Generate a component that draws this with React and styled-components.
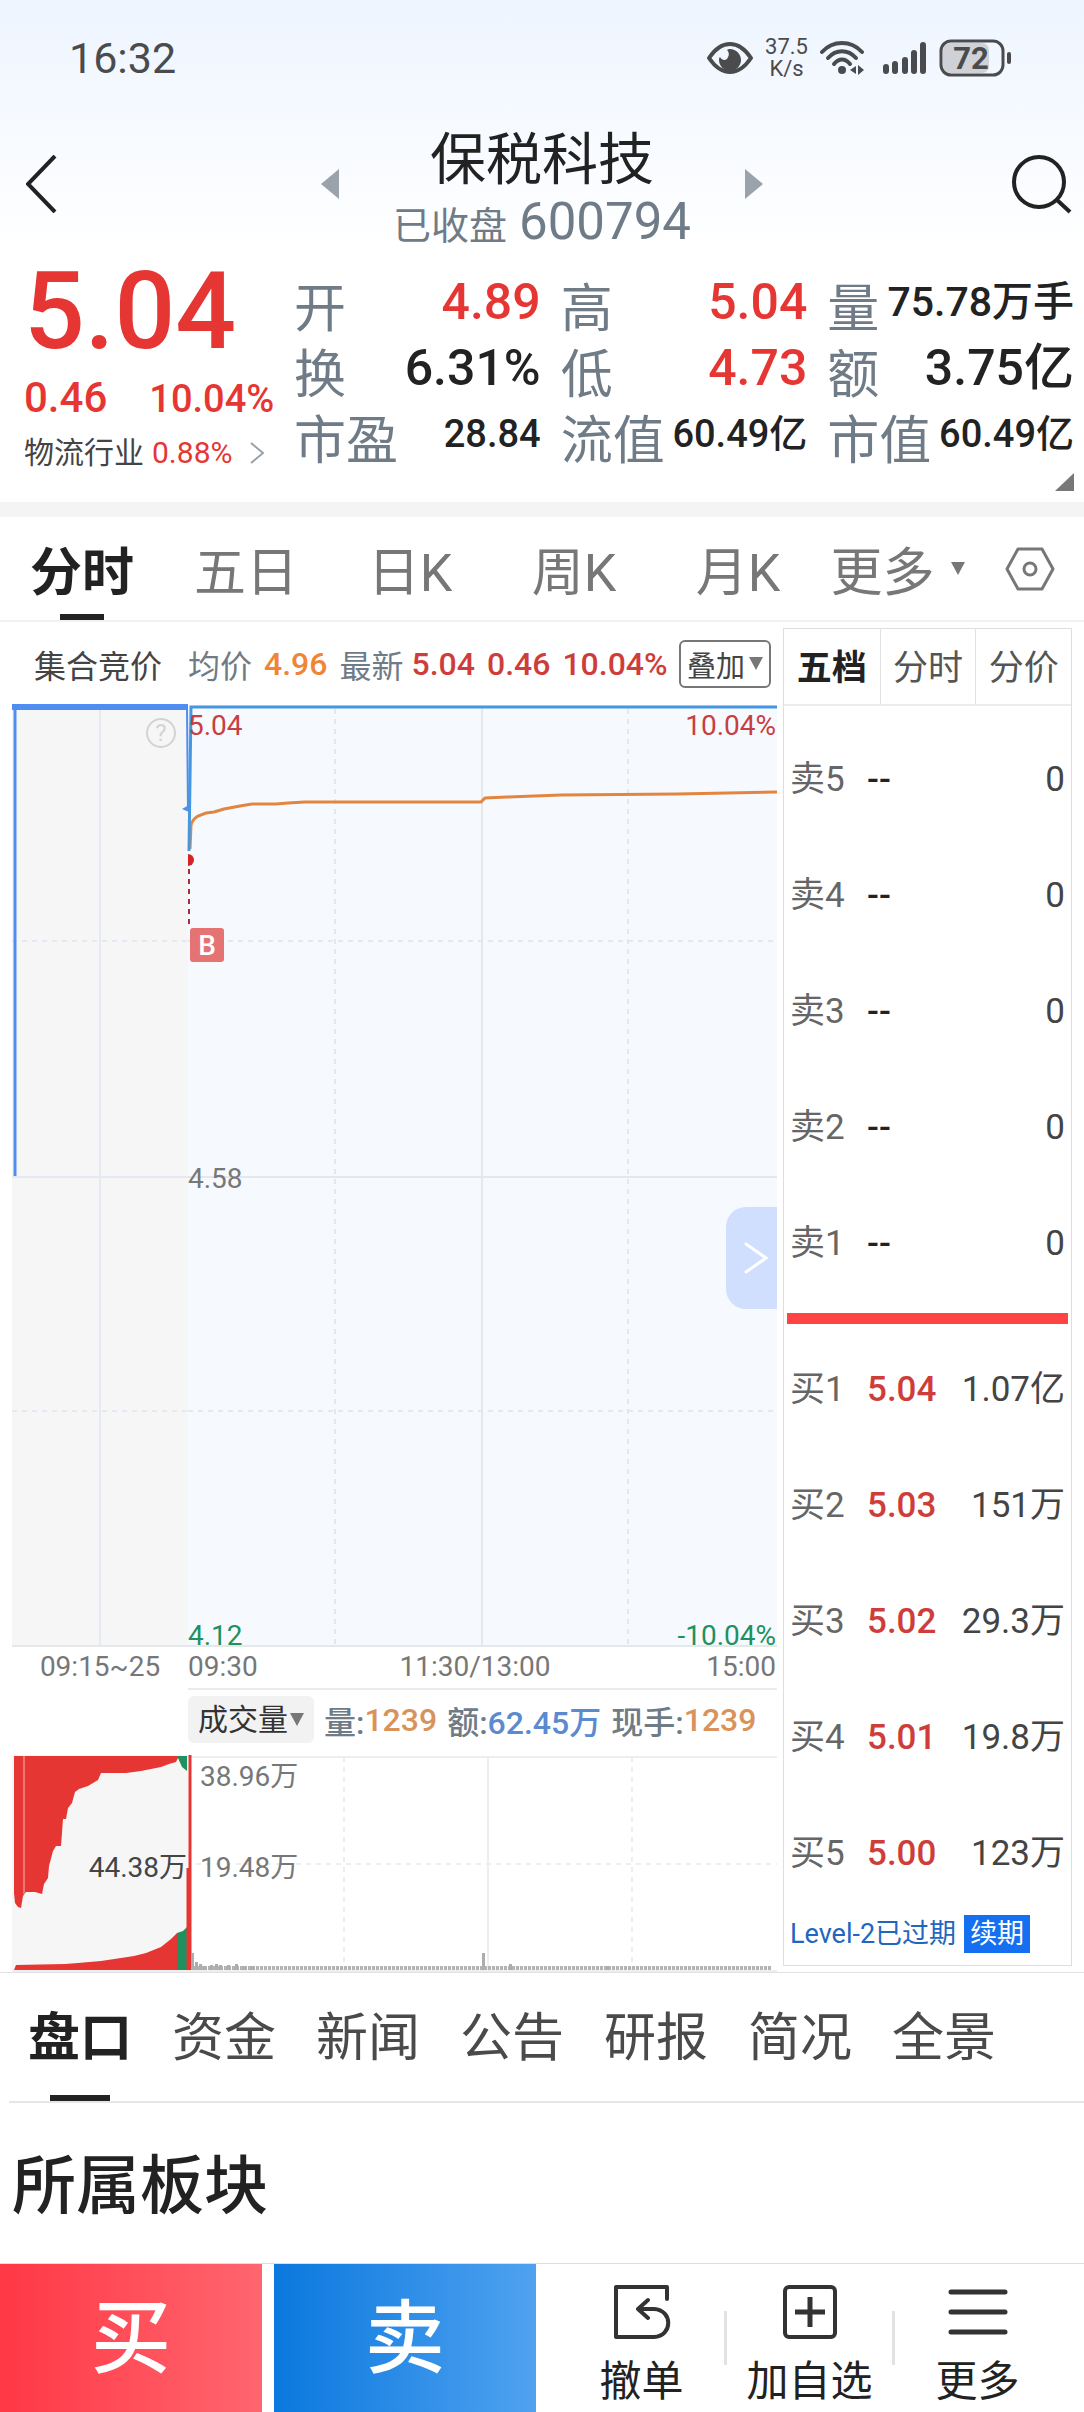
import React, { useState } from 'react';
import styled, { createGlobalStyle } from 'styled-components';

const GlobalStyle = createGlobalStyle`
  * {
    box-sizing: border-box;
  }

  body {
    margin: 0;
    background: #ffffff;
    color: #222222;
    font-family: Roboto, 'Noto Sans CJK SC', sans-serif;
  }

  button, select {
    margin: 0;
    padding: 0;
    border: 0;
    background: none;
    color: inherit;
    font: inherit;
    cursor: pointer;
  }

  a {
    color: inherit;
    text-decoration: none;
  }

  svg {
    display: block;
  }
`;

const colors = {
    red: '#e63633',
    green: '#1f9160',
    slate: '#6f7b86',
    ink: '#222222',
    orange: '#f08535',
    blue: '#5b8ad0',
};

const Top = styled.div`
  background: linear-gradient(#eef5ff, #ffffff 250px);
`;

const StatusBar = styled.div`
  display: flex;
  justify-content: space-between;
  align-items: center;
  height: 116px;
  padding: 0 72px 0 69px;
  color: #4a4b4d;
`;

const Clock = styled.span`
  font-size: 43px;
`;

const StatusIcons = styled.div`
  display: flex;
  align-items: center;
  gap: 12px;
`;

const NetSpeed = styled.span`
  font-size: 22px;
  line-height: 22px;
  text-align: center;
`;

const NetLine = styled.span`
  display: block;
`;

const Header = styled.header`
  display: grid;
  grid-template-columns: 1fr auto 1fr;
  align-items: center;
  height: 136px;
  padding: 0 11px;
`;

const IconButton = styled.button`
  display: flex;
  justify-self: ${(props) => props.$side || 'center'};
  padding-left: ${(props) => (props.$side === 'start' ? 15 : 0)}px;
`;

const StockSwitch = styled.div`
  display: flex;
  justify-content: space-between;
  align-items: center;
  width: 442px;
`;

const StockTitle = styled.div`
  padding-top: 12px;
  text-align: center;
`;

const StockName = styled.h1`
  margin: 0;
  font-size: 56px;
  font-weight: 400;
  line-height: 64px;
`;

const StockCode = styled.div`
  display: flex;
  align-items: baseline;
  gap: 12px;
  height: 60px;
  color: ${colors.slate};
  font-size: 51px;
  line-height: 60px;
`;

const StockState = styled.span`
  font-size: 38px;
`;

const Quote = styled.section`
  display: grid;
  grid-template-columns: 270px 1fr;
  padding: 10px 10px 11px 24px;
`;

const Price = styled.div`
  color: ${colors.red};
  font-size: 107px;
  font-weight: 500;
  line-height: 100px;
`;

const Change = styled.div`
  display: flex;
  align-items: baseline;
  gap: 42px;
  margin-top: 8px;
  color: ${colors.red};
  font-size: 42px;
  font-weight: 500;
  line-height: 56px;
`;

const ChangeRate = styled.span`
  font-size: 38px;
`;

const Industry = styled.a`
  display: flex;
  align-items: center;
  gap: 8px;
  margin-top: 6px;
  color: #444444;
  font-size: 30px;
  line-height: 40px;

  svg {
    margin-left: 10px;
  }
`;

const Rate = styled.span`
  color: ${colors.red};
`;

const Stats = styled.dl`
  display: grid;
  grid-template-columns: repeat(3, 1fr);
  grid-auto-rows: 66px;
  column-gap: 20px;
  margin: 12px 0 0;
`;

const Stat = styled.div`
  display: flex;
  justify-content: space-between;
  white-space: nowrap;
`;

const StatLabel = styled.dt`
  color: ${colors.slate};
  font-size: 52px;
  line-height: 72px;
`;

const StatValue = styled.dd`
  margin: 0;
  color: ${(props) => (props.$up ? colors.red : colors.ink)};
  font-size: ${(props) => props.$size}px;
  font-weight: 500;
  line-height: 56px;
`;

const Corner = styled.svg`
  grid-column: 1 / -1;
  justify-self: end;
`;

const Band = styled.div`
  height: 15px;
  background: #f4f4f4;
`;

const PeriodBar = styled.nav`
  display: flex;
  align-items: stretch;
  height: 105px;
  border-bottom: 2px solid #f2f2f2;
`;

const PeriodTab = styled.button`
  position: relative;
  flex: 164 1 0;
  font-size: 52px;
  color: ${(props) => (props.$active ? colors.ink : '#777777')};
  font-weight: ${(props) => (props.$active ? 700 : 400)};

  &::after {
    content: '';
    display: ${(props) => (props.$active ? 'block' : 'none')};
    position: absolute;
    left: 50%;
    bottom: 0;
    width: 44px;
    height: 6px;
    margin-left: -22px;
    background: ${colors.ink};
  }
`;

const MoreTab = styled.button`
  display: flex;
  flex: 155 1 0;
  justify-content: center;
  align-items: center;
  gap: 16px;
  color: #777777;
  font-size: 52px;
`;

const SettingTab = styled.button`
  display: flex;
  flex: 109 1 0;
  justify-content: center;
  align-items: center;
`;

const Board = styled.main`
  display: grid;
  grid-template-columns: 765fr 289fr;
  align-items: start;
  gap: 6px;
  padding: 6px 12px 0;
  border-bottom: 1px solid #e2e2e2;
`;

const ChartColumn = styled.section`
  min-width: 0;
`;

const InfoRow = styled.div`
  display: flex;
  align-items: center;
  height: 75px;
  padding: 0 6px 4px 22px;
  font-size: 32px;
  white-space: nowrap;
`;

const InfoLabel = styled.span`
  margin-left: ${(props) => props.$gap || 0}px;
  color: ${(props) => props.$color || colors.slate};
`;

const InfoValue = styled.span`
  margin-left: ${(props) => props.$gap}px;
  color: ${(props) => props.$color || '#cf3d3b'};
  font-weight: 500;
`;

const OverlayButton = styled.button`
  display: flex;
  align-items: center;
  gap: 4px;
  height: 48px;
  margin-left: auto;
  padding: 0 6px;
  border: 2px solid #777777;
  border-radius: 6px;
  color: #444444;
  font-size: 29px;
`;

const ChartArea = styled.div`
  position: relative;
`;

const Chart = styled.svg`
  width: 100%;
  height: auto;
  font-size: 28px;
`;

const ExpandButton = styled.button`
  display: flex;
  justify-content: center;
  align-items: center;
  position: absolute;
  top: 504px;
  right: 0;
  width: 51px;
  height: 102px;
  padding-left: 8px;
  border-radius: 20px 0 0 20px;
  background: #cfdffd;
`;

const IndicatorRow = styled.div`
  display: flex;
  align-items: center;
  margin-left: 23%;
  height: 65px;
  padding-bottom: 4px;
  border-top: 2px solid #ebebeb;
  color: ${colors.slate};
  font-size: 32px;
  font-weight: 500;
  white-space: nowrap;
`;

const IndicatorPick = styled.label`
  display: flex;
  align-items: center;
  height: 47px;
  margin-right: 10px;
  padding: 0 10px;
  border-radius: 6px;
  background: #f2f2f2;
  color: #333333;
`;

const IndicatorSelect = styled.select`
  appearance: none;
  width: 92px;
  font-size: 30px;
  font-weight: 400;
`;

const IndicatorValue = styled.span`
  margin-right: 10px;
  color: ${(props) => props.$color};
`;

const OrderBook = styled.aside`
  border: 1px solid #dedede;
`;

const BookTabs = styled.div`
  display: grid;
  grid-template-columns: repeat(3, 1fr);
  height: 77px;
  border-bottom: 2px solid #ececec;
`;

const BookTab = styled.button`
  padding-bottom: 4px;
  border-left: ${(props) => (props.$first ? 0 : 1)}px solid #e2e2e2;
  color: ${(props) => (props.$active ? colors.ink : '#555555')};
  font-size: 35px;
  font-weight: ${(props) => (props.$active ? 700 : 400)};
`;

const BookTable = styled.table`
  width: 100%;
  margin-top: ${(props) => props.$top}px;
  border-collapse: collapse;
  font-size: 35px;
  line-height: 116px;
  white-space: nowrap;

  th, td {
    padding: 0 0 0 6px;
    text-align: left;
    vertical-align: baseline;
    font-weight: 400;
  }

  th {
    width: 77px;
    color: #666666;
  }

  td:last-child {
    padding: 0 6px 0 0;
    color: #444444;
    text-align: right;
  }
`;

const BookPrice = styled.td`
  && {
    color: ${(props) => (props.$empty ? colors.ink : '#cf3d3b')};
    font-weight: 500;
  }
`;

const BookDivider = styled.div`
  height: 11px;
  margin: 11px 3px 0;
  background: #ff4444;
`;

const LevelRow = styled.div`
  display: flex;
  align-items: center;
  gap: 8px;
  padding: 3px 0 12px 6px;
  color: #2266c0;
  font-size: 27px;
  line-height: 38px;
  white-space: nowrap;
`;

const RenewButton = styled.button`
  height: 38px;
  padding: 0 6px;
  background: #1470f0;
  color: #ffffff;
`;

const SectionTabs = styled.nav`
  display: flex;
  gap: 40px;
  height: 130px;
  margin-left: 9px;
  padding: 0 0 0 19px;
  border-bottom: 2px solid #e6e6e6;
`;

const SectionTab = styled.button`
  position: relative;
  padding-bottom: 8px;
  font-size: 52px;
  color: ${(props) => (props.$active ? colors.ink : '#4a4a4a')};
  font-weight: ${(props) => (props.$active ? 700 : 400)};

  &::after {
    content: '';
    display: ${(props) => (props.$active ? 'block' : 'none')};
    position: absolute;
    left: 50%;
    bottom: 0;
    width: 60px;
    height: 6px;
    margin-left: -30px;
    background: ${colors.ink};
  }
`;

const SectionTitle = styled.h2`
  margin: 0;
  padding: 36px 12px 28px;
  font-size: 64px;
  font-weight: 500;
  line-height: 96px;
`;

const BottomBar = styled.footer`
  display: flex;
  height: 150px;
  border-top: 1px solid #dddddd;
`;

const TradeButton = styled.button`
  flex: 262 1 0;
  margin-right: 12px;
  background: linear-gradient(90deg, ${(props) => props.$from}, ${(props) => props.$to});
  color: #ffffff;
  font-size: 80px;
  font-weight: 500;
  line-height: 140px;
`;

const Actions = styled.div`
  display: flex;
  flex: 501 1 0;
  padding: 20px 24px 0 11px;
`;

const Action = styled.button`
  display: flex;
  flex: 1 1 0;
  flex-direction: column;
  align-items: center;
  gap: 12px;
  color: ${colors.ink};
  font-size: 42px;
  line-height: 60px;
  white-space: nowrap;
`;

const ActionLine = styled.span`
  width: 3px;
  height: 54px;
  margin-top: 27px;
  background: #e2e2e2;
`;

const stats = [
    { label: '开', value: '4.89', size: 50, up: true },
    { label: '高', value: '5.04', size: 50, up: true },
    { label: '量', value: '75.78万手', size: 41 },
    { label: '换', value: '6.31%', size: 50 },
    { label: '低', value: '4.73', size: 50, up: true },
    { label: '额', value: '3.75亿', size: 50 },
    { label: '市盈', value: '28.84', size: 38 },
    { label: '流值', value: '60.49亿', size: 38 },
    { label: '市值', value: '60.49亿', size: 38 },
];

const periods = ['分时', '五日', '日K', '周K', '月K'];
const bookTabs = ['五档', '分时', '分价'];
const sections = ['盘口', '资金', '新闻', '公告', '研报', '简况', '全景'];

const sells = [
    ['卖5', '--', '0'],
    ['卖4', '--', '0'],
    ['卖3', '--', '0'],
    ['卖2', '--', '0'],
    ['卖1', '--', '0'],
];

const buys = [
    ['买1', '5.04', '1.07亿'],
    ['买2', '5.03', '151万'],
    ['买3', '5.02', '29.3万'],
    ['买4', '5.01', '19.8万'],
    ['买5', '5.00', '123万'],
];

// x position and height of the taller volume bars
const volumeBars = [
    [181, 17], [185, 8], [189, 6], [193, 4], [200, 5], [205, 6], [209, 5],
    [217, 5], [225, 6], [233, 4], [241, 4], [472, 17], [499, 6], [596, 4],
];

const Caret = ({ width = 14, height = 13, color = '#777777' }) => (
    <svg width={width} height={height} viewBox="0 0 14 13" preserveAspectRatio="none" aria-hidden="true">
        <path d="M0 0H14L7 13Z" fill={color} />
    </svg>
);

const EyeIcon = () => (
    <svg width="46" height="32" viewBox="0 0 46 32" fill="none" aria-hidden="true">
        <path d="M2 16C8 7 15 2 23 2S38 7 44 16C38 25 31 30 23 30S8 25 2 16Z" stroke="#4a4b4d" strokeWidth="4" strokeLinejoin="round" />
        <path d="M23 7C29 7 34 12 34 18S29 29 23 29 12 24 12 18C12 17 12 16 13 15C15 19 20 19 21 15C23 12 21 9 20 8C21 7 22 7 23 7Z" fill="#4a4b4d" />
    </svg>
);

const WifiIcon = () => (
    <svg width="51" height="36" viewBox="0 0 51 36" fill="none" stroke="#4a4b4d" strokeWidth="4" strokeLinecap="round" aria-hidden="true">
        <path d="M2 12C13 0 31 0 42 12" />
        <path d="M8 18C16 9 28 9 36 18" />
        <path d="M14 24C19 18 25 18 30 24" />
        <circle cx="22" cy="30" r="4" fill="#4a4b4d" stroke="none" />
        <path d="M30 30L36 26V34ZM38 25L44 30L38 35Z" fill="#4a4b4d" stroke="none" />
    </svg>
);

const SignalIcon = () => (
    <svg width="44" height="36" viewBox="0 0 44 36" stroke="#4a4b4d" strokeWidth="6" strokeLinecap="round" aria-hidden="true">
        <path d="M3 27V31M12 24V31M22 20V31M31 13V31M40 5V31" />
    </svg>
);

const BatteryIcon = () => (
    <svg width="73" height="38" viewBox="0 0 73 38" aria-hidden="true">
        <rect x="4" y="4" width="46" height="30" rx="7" fill="#cfd1d6" />
        <rect x="2" y="2" width="62" height="34" rx="10" fill="none" stroke="#4a4b4d" strokeWidth="3" />
        <rect x="68" y="13" width="4" height="12" rx="2" fill="#4a4b4d" />
        <text x="32" y="30" textAnchor="middle" fontSize="31" fontWeight="700" fill="#4a4b4d">72</text>
    </svg>
);

const PriceChart = () => (
    <Chart viewBox="0 0 765 985" role="img" aria-label="分时走势">
        <rect x="0" y="2" width="176" height="941" fill="#f6f6f6" />
        <rect x="176" y="2" width="589" height="941" fill="#f6faff" />
        <g stroke="#e4e9f2" strokeWidth="2">
            <path d="M88 6V943" />
            <path d="M0 238H176M0 708H176" strokeDasharray="5 5" />
        </g>
        <g stroke="#e5e8e8" strokeWidth="2">
            <path d="M470 6V943M176 474H765M0 943H765" />
            <path d="M323 6V943M616 6V943M176 238H765M176 708H765" strokeDasharray="5 5" />
        </g>
        <path d="M0 474H176" stroke="#e4e9f2" strokeWidth="2" />
        <path d="M178 146L179 122Q180 117 186 113L194 110L202 109L212 106L228 103L240 101L264 101L276 100L293 99H469L473 95L495 94L549 92L665 91L765 89" fill="none" stroke="#e3853f" strokeWidth="3" />
        <path d="M3 4V473" stroke="#4f8df0" strokeWidth="3" />
        <path d="M0 4H176" stroke="#4f8df0" strokeWidth="6" />
        <path d="M175 4L176 106" stroke="#4f8df0" strokeWidth="2" />
        <path d="M170 106L177 102V109Z" fill="#4f8df0" />
        <path d="M177 148L179 4H765" fill="none" stroke="#4597e2" strokeWidth="3" />
        <path d="M176 151A6 6 0 0 1 176 163Z" fill="#d42428" />
        <path d="M177 166V222" stroke="#b02c30" strokeWidth="2" strokeDasharray="5 5" />
        <rect x="178" y="225" width="34" height="34" rx="3" fill="#e57373" />
        <text x="195" y="252" textAnchor="middle" fontWeight="500" fill="#ffffff">B</text>
        <circle cx="149" cy="30" r="14" fill="none" stroke="#d3d3d3" strokeWidth="2" />
        <text x="149" y="38" textAnchor="middle" fontSize="24" fill="#d3d3d3">?</text>
        <g fill="#c83f3f">
            <text x="176" y="32">5.04</text>
            <text x="764" y="32" textAnchor="end">10.04%</text>
        </g>
        <g fill="#777777">
            <text x="176" y="485">4.58</text>
            <text x="88" y="973" textAnchor="middle">09:15~25</text>
            <text x="176" y="973">09:30</text>
            <text x="463" y="973" textAnchor="middle">11:30/13:00</text>
            <text x="764" y="973" textAnchor="end">15:00</text>
        </g>
        <g fill={colors.green}>
            <text x="176" y="942">4.12</text>
            <text x="764" y="942" textAnchor="end">-10.04%</text>
        </g>
    </Chart>
);

const VolumeChart = () => (
    <Chart viewBox="0 0 765 219" role="img" aria-label="成交量">
        <rect x="0" y="2" width="176" height="216" fill="#f6f6f6" />
        <g stroke="#eeeeee" strokeWidth="2">
            <path d="M176 4H765M476 4V218M0 218H765" />
            <path d="M332 4V218M620 4V218M184 111H765" strokeDasharray="5 5" />
        </g>
        <path d="M2 3V140L3 150L6 154L9 155L11 143L14 139H23L30 141L32 131L36 125L37 113L41 98L44 93H49L51 66H54L56 55L60 50L63 39L67 36L76 33L86 27L89 20H114L129 18L149 14L157 11L164 9L166 5V3Z" fill={colors.red} />
        <path d="M166 3V5L170 14L175 18V3Z" fill="#1f9160" />
        <path d="M12 3V141" stroke="#f6b6b4" strokeWidth="1" />
        <path d="M2 217L4 212L53 211L66 210L89 208L109 205L122 203L134 200L149 194L159 186L165 180V217Z" fill={colors.red} />
        <path d="M165 217V180L171 178L175 174V217Z" fill="#1f9160" />
        <path d="M178 2V217" stroke={colors.red} strokeWidth="3" />
        <path d="M176 115V217" stroke={colors.red} strokeWidth="3" />
        <path d="M180 215H759" stroke="#b3b3b3" strokeWidth="4" strokeDasharray="3 1" />
        <g fill="#adadad">
            {volumeBars.map(([x, height]) => (
                <rect key={x} x={x - 2} y={217 - height} width="3" height={height} />
            ))}
        </g>
        <text x="175" y="124" textAnchor="end" fill="#444444">44.38万</text>
        <g fill="#777777">
            <text x="188" y="33">38.96万</text>
            <text x="188" y="124">19.48万</text>
        </g>
    </Chart>
);

const BookRows = ({ rows, top }) => (
    <BookTable $top={top}>
        <tbody>
            {rows.map(([label, price, volume]) => (
                <tr key={label}>
                    <th scope="row">{label}</th>
                    <BookPrice $empty={price === '--'}>{price}</BookPrice>
                    <td>{volume}</td>
                </tr>
            ))}
        </tbody>
    </BookTable>
);

const App = () => {
    const [period, setPeriod] = useState('分时');
    const [bookTab, setBookTab] = useState('五档');
    const [section, setSection] = useState('盘口');

    return (
        <>
            <GlobalStyle />
            <Top>
                <StatusBar>
                    <Clock>16:32</Clock>
                    <StatusIcons>
                        <EyeIcon />
                        <NetSpeed>
                            <NetLine>37.5</NetLine>
                            <NetLine>K/s</NetLine>
                        </NetSpeed>
                        <WifiIcon />
                        <SignalIcon />
                        <BatteryIcon />
                    </StatusIcons>
                </StatusBar>

                <Header>
                    <IconButton $side="start" aria-label="返回">
                        <svg width="31" height="58" viewBox="0 0 31 58" fill="none" stroke="#222222" strokeWidth="4">
                            <path d="M29 1L2 29L29 57" />
                        </svg>
                    </IconButton>
                    <StockSwitch>
                        <IconButton aria-label="上一只">
                            <svg width="18" height="30" viewBox="0 0 18 30">
                                <path d="M18 0V30L0 15Z" fill="#9aa3ac" />
                            </svg>
                        </IconButton>
                        <StockTitle>
                            <StockName>保税科技</StockName>
                            <StockCode><StockState>已收盘</StockState>600794</StockCode>
                        </StockTitle>
                        <IconButton aria-label="下一只">
                            <svg width="18" height="30" viewBox="0 0 18 30">
                                <path d="M0 0V30L18 15Z" fill="#9aa3ac" />
                            </svg>
                        </IconButton>
                    </StockSwitch>
                    <IconButton $side="end" aria-label="搜索">
                        <svg width="62" height="60" viewBox="0 0 62 60" fill="none" stroke="#222222" strokeWidth="4">
                            <circle cx="28" cy="28" r="25" />
                            <path d="M46 46L59 58" />
                        </svg>
                    </IconButton>
                </Header>

                <Quote>
                    <div>
                        <Price>5.04</Price>
                        <Change>0.46<ChangeRate>10.04%</ChangeRate></Change>
                        <Industry href="#industry">
                            物流行业<Rate>0.88%</Rate>
                            <svg width="14" height="22" viewBox="0 0 14 22" fill="none" stroke="#9aa3ac" strokeWidth="2">
                                <path d="M1 1L13 11L1 21" />
                            </svg>
                        </Industry>
                    </div>
                    <Stats>
                        {stats.map((item) => (
                            <Stat key={item.label}>
                                <StatLabel>{item.label}</StatLabel>
                                <StatValue $size={item.size} $up={item.up}>{item.value}</StatValue>
                            </Stat>
                        ))}
                    </Stats>
                    <Corner width="19" height="18" viewBox="0 0 19 18">
                        <path d="M19 0V18H0Z" fill="#777777" />
                    </Corner>
                </Quote>
            </Top>

            <Band />

            <PeriodBar>
                {periods.map((name) => (
                    <PeriodTab key={name} $active={name === period} onClick={() => setPeriod(name)}>
                        {name}
                    </PeriodTab>
                ))}
                <MoreTab aria-haspopup="menu">更多<Caret /></MoreTab>
                <SettingTab aria-label="设置">
                    <svg width="50" height="44" viewBox="0 0 50 44" fill="none" stroke="#777777" strokeWidth="3">
                        <path d="M13 2H37L48 22L37 42H13L2 22Z" strokeLinejoin="round" />
                        <circle cx="25" cy="22" r="6" />
                    </svg>
                </SettingTab>
            </PeriodBar>

            <Board>
                <ChartColumn>
                    <InfoRow>
                        <InfoLabel $color="#444444">集合竞价</InfoLabel>
                        <InfoLabel $gap={26}>均价</InfoLabel>
                        <InfoValue $gap={12} $color={colors.orange}>4.96</InfoValue>
                        <InfoLabel $gap={12}>最新</InfoLabel>
                        <InfoValue $gap={8}>5.04</InfoValue>
                        <InfoValue $gap={12}>0.46</InfoValue>
                        <InfoValue $gap={12}>10.04%</InfoValue>
                        <OverlayButton aria-haspopup="menu">叠加<Caret /></OverlayButton>
                    </InfoRow>
                    <ChartArea>
                        <PriceChart />
                        <ExpandButton aria-label="展开">
                            <svg width="24" height="32" viewBox="0 0 24 32" fill="none" stroke="#ffffff" strokeWidth="3" strokeLinecap="round">
                                <path d="M2 2L22 16L2 30" />
                            </svg>
                        </ExpandButton>
                    </ChartArea>
                    <IndicatorRow>
                        <IndicatorPick>
                            <IndicatorSelect aria-label="指标" defaultValue="成交量">
                                <option>成交量</option>
                            </IndicatorSelect>
                            <Caret />
                        </IndicatorPick>
                        量:<IndicatorValue $color="#d9935a">1239</IndicatorValue>
                        额:<IndicatorValue $color={colors.blue}>62.45万</IndicatorValue>
                        现手:<IndicatorValue $color="#d9935a">1239</IndicatorValue>
                    </IndicatorRow>
                    <VolumeChart />
                </ChartColumn>

                <OrderBook>
                    <BookTabs>
                        {bookTabs.map((name, index) => (
                            <BookTab
                                key={name}
                                $first={index === 0}
                                $active={name === bookTab}
                                onClick={() => setBookTab(name)}
                            >
                                {name}
                            </BookTab>
                        ))}
                    </BookTabs>
                    <BookRows rows={sells} top={16} />
                    <BookDivider />
                    <BookRows rows={buys} top={8} />
                    <LevelRow>
                        Level-2已过期
                        <RenewButton>续期</RenewButton>
                    </LevelRow>
                </OrderBook>
            </Board>

            <SectionTabs>
                {sections.map((name) => (
                    <SectionTab key={name} $active={name === section} onClick={() => setSection(name)}>
                        {name}
                    </SectionTab>
                ))}
            </SectionTabs>

            <SectionTitle>所属板块</SectionTitle>

            <BottomBar>
                <TradeButton $from="#ff3845" $to="#ff6670">买</TradeButton>
                <TradeButton $from="#0a78de" $to="#50a2f0">卖</TradeButton>
                <Actions>
                    <Action>
                        <svg width="58" height="56" viewBox="0 0 58 56" fill="none" stroke="#333333" strokeWidth="4" strokeLinejoin="round" strokeLinecap="round">
                            <path d="M54 15V3H3V53H41C60 52 60 26 41 25H25M35 16L25 25L35 34" />
                        </svg>
                        撤单
                    </Action>
                    <ActionLine />
                    <Action>
                        <svg width="56" height="56" viewBox="0 0 56 56" fill="none" stroke="#333333" strokeWidth="4">
                            <rect x="3" y="3" width="50" height="50" rx="4" />
                            <path d="M28 13V43M13 28H43" strokeWidth="5" />
                        </svg>
                        加自选
                    </Action>
                    <ActionLine />
                    <Action>
                        <svg width="60" height="56" viewBox="0 0 60 56" stroke="#333333" strokeWidth="5" strokeLinecap="round">
                            <path d="M3 8H57M3 28H57M3 48H57" />
                        </svg>
                        更多
                    </Action>
                </Actions>
            </BottomBar>
        </>
    );
};

export default App;
